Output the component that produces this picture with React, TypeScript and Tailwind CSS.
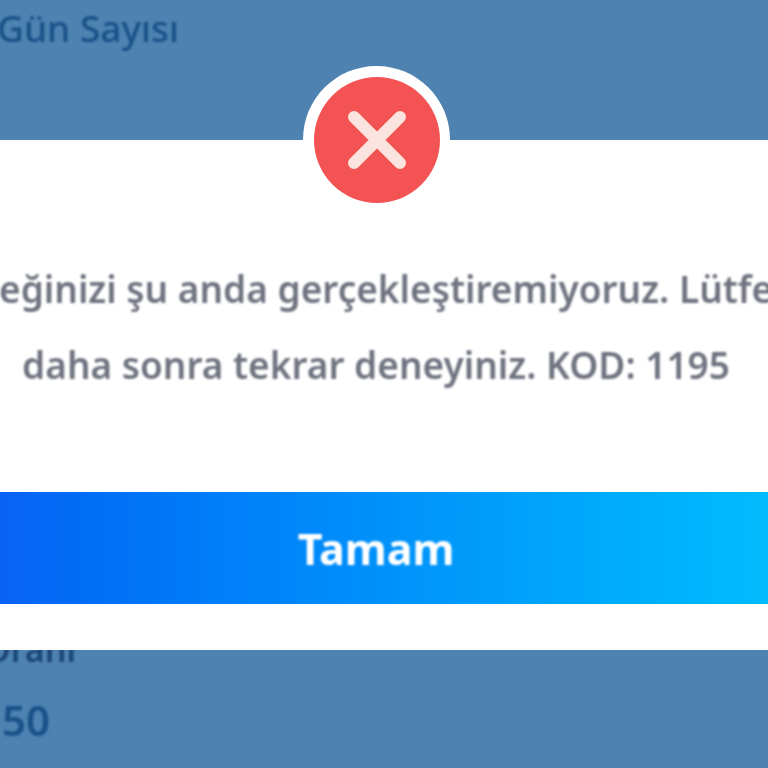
const font = { fontFamily: '"Noto Sans", sans-serif' };

const ErrorIcon = () => {
  return (
    <div className="absolute z-20 left-[303px] top-[66px] w-[147px] h-[147px] rounded-full bg-white flex items-center justify-center blur-[0.6px]">
      <div className="w-[126px] h-[126px] rounded-full bg-[#f45354] flex items-center justify-center">
        <svg width="60" height="60" viewBox="0 0 60 60" fill="none">
          <path
            d="M7 7L53 53M53 7L7 53"
            stroke="#fbe3df"
            strokeWidth="12"
            strokeLinecap="round"
          />
        </svg>
      </div>
    </div>
  );
};

export default function App() {
  return (
    <div
      className="relative w-[768px] h-[768px] overflow-hidden bg-[#4d82b1] flex flex-col"
      style={font}
    >
      <div className="h-[140px] shrink-0 pt-[4px]">
        <p className="-ml-[3px] text-[37px] leading-[48px] font-medium text-[#1a5288] whitespace-nowrap blur-[1px]">
          Gün Sayısı
        </p>
      </div>

      <div className="relative z-10 h-[510px] shrink-0 bg-white flex flex-col items-center">
        <div className="mt-[111px] mr-[16px] flex flex-col items-center text-[#6f7380] text-[37px] font-semibold leading-[76px] whitespace-nowrap blur-[1px]">
          <p>isteğinizi şu anda gerçekleştiremiyoruz. Lütfen</p>
          <p>daha sonra tekrar deneyiniz. KOD: 1195</p>
        </div>
        <button className="mt-[89px] w-full h-[112px] shrink-0 pr-[16px] pt-[2px] bg-gradient-to-r from-[#0a62f5] to-[#02bcfd] text-white text-[43px] font-bold flex items-center justify-center">
          <span className="blur-[0.8px]">Tamam</span>
        </button>
      </div>

      <div className="relative flex-1">
        <p className="absolute left-[-16px] top-[-23px] text-[34px] leading-[44px] font-semibold text-[#1a4676] whitespace-nowrap blur-[1px]">
          Oranı
        </p>
        <p className="absolute left-[2px] top-[45px] text-[42px] leading-[50px] font-semibold text-[#1a5288] blur-[1px]">
          50
        </p>
      </div>

      <ErrorIcon />
    </div>
  );
}
